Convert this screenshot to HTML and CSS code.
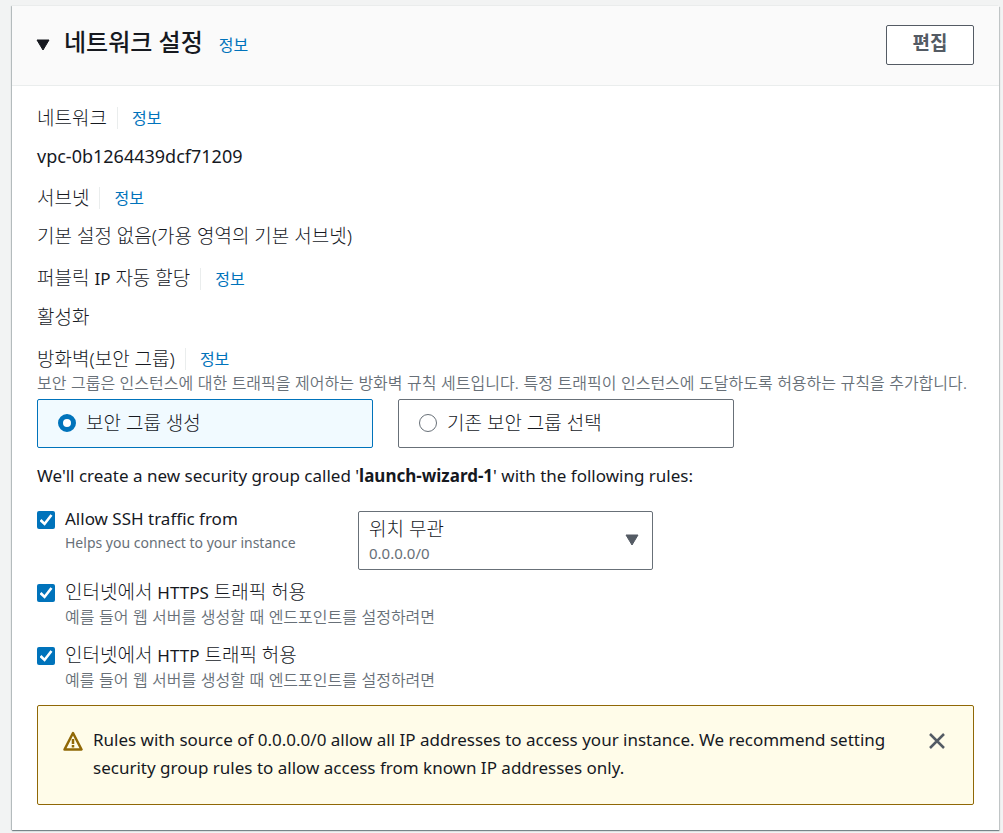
FILE: index.html
```html
<!DOCTYPE html>
<html lang="ko">
<head>
<meta charset="utf-8">
<title>네트워크 설정</title>
<link rel="stylesheet" href="styles.css">
</head>
<body>
<main class="card">
  <header class="card-header">
    <button class="toggle" type="button" aria-expanded="true" aria-label="네트워크 설정 접기">
      <svg class="caret" viewBox="0 0 14 12" aria-hidden="true"><path d="M1 1h12L7 11z" fill="currentColor" stroke="currentColor" stroke-linejoin="round"/></svg>
    </button>
    <h2 class="title">네트워크 설정</h2>
    <a class="info" href="#">정보</a>
    <button class="edit" type="button">편집</button>
  </header>
  <div class="card-body">
    <dl class="fields">
      <div class="field">
        <dt class="field-label"><span class="name">네트워크</span><a class="info" href="#">정보</a></dt>
        <dd class="value identifier">vpc-0b1264439dcf71209</dd>
      </div>
      <div class="field">
        <dt class="field-label"><span class="name">서브넷</span><a class="info" href="#">정보</a></dt>
        <dd class="value">기본 설정 없음(가용 영역의 기본 서브넷)</dd>
      </div>
      <div class="field">
        <dt class="field-label"><span class="name">퍼블릭 <span class="latin">IP</span> 자동 할당</span><a class="info" href="#">정보</a></dt>
        <dd class="value">활성화</dd>
      </div>
    </dl>
    <section class="firewall">
      <div class="field-label"><span class="name" id="firewall-name">방화벽(보안 그룹)</span><a class="info" href="#">정보</a></div>
      <p class="hint">보안 그룹은 인스턴스에 대한 트래픽을 제어하는 방화벽 규칙 세트입니다. 특정 트래픽이 인스턴스에 도달하도록 허용하는 규칙을 추가합니다.</p>
      <div class="tiles" role="radiogroup" aria-labelledby="firewall-name">
        <label class="tile"><input class="radio" type="radio" name="group" checked><span>보안 그룹 생성</span></label>
        <label class="tile"><input class="radio" type="radio" name="group"><span>기존 보안 그룹 선택</span></label>
      </div>
    </section>
    <p class="summary latin">We'll create a new security group called '<b>launch-wizard-1</b>' with the following rules:</p>
    <div class="rules">
      <div class="rule-row">
        <label class="rule">
          <input class="check" type="checkbox" checked>
          <span class="rule-text"><span class="rule-name latin">Allow SSH traffic from</span><span class="rule-hint latin-small">Helps you connect to your instance</span></span>
        </label>
        <div class="picker">
          <select class="select" aria-label="Allow SSH traffic from"><option>위치 무관</option></select>
          <span class="picker-detail">0.0.0.0/0</span>
          <svg class="picker-caret" viewBox="0 0 14 12" aria-hidden="true"><path d="M1 1h12L7 11z" fill="currentColor" stroke="currentColor" stroke-linejoin="round"/></svg>
        </div>
      </div>
      <label class="rule">
        <input class="check" type="checkbox" checked>
        <span class="rule-text"><span class="rule-name">인터넷에서 <span class="latin">HTTPS</span> 트래픽 허용</span><span class="rule-hint">예를 들어 웹 서버를 생성할 때 엔드포인트를 설정하려면</span></span>
      </label>
      <label class="rule">
        <input class="check" type="checkbox" checked>
        <span class="rule-text"><span class="rule-name">인터넷에서 <span class="latin">HTTP</span> 트래픽 허용</span><span class="rule-hint">예를 들어 웹 서버를 생성할 때 엔드포인트를 설정하려면</span></span>
      </label>
    </div>
    <div class="alert" role="alert">
      <svg class="warning" viewBox="0 0 20 20" aria-hidden="true"><path d="M10 2 18.5 18.5h-17z" fill="none" stroke="currentColor" stroke-width="2.5" stroke-linejoin="round"/><path d="M10 8v5M10 14v2.5" fill="none" stroke="currentColor" stroke-width="2.5"/></svg>
      <p class="alert-text latin">Rules with source of 0.0.0.0/0 allow all IP addresses to access your instance. We recommend setting security group rules to allow access from known IP addresses only.</p>
      <button class="close" type="button" aria-label="닫기">
        <svg viewBox="0 0 18 18" aria-hidden="true"><path d="M2 2l14 14M16 2L2 16" fill="none" stroke="currentColor" stroke-width="2.5"/></svg>
      </button>
    </div>
  </div>
</main>
</body>
</html>
```

FILE: styles.css
```css
* { box-sizing: border-box; }
body {
  margin: 0;
  padding: 6px 4px 3px 12px;
  background: #f2f3f3;
  color: #16191f;
  font-family: "Noto Sans", "Noto Sans CJK KR", sans-serif;
  font-size: 19px;
  font-weight: 300;
  line-height: 28px;
}
h2, p, dl, dd { margin: 0; }
button { font: inherit; cursor: pointer; }
.latin { font-size: 17px; font-weight: 400; }
.identifier { font-size: 18px; font-weight: 400; }
.card {
  background: #fff;
  box-shadow: 0 1px 1px 0 rgba(0, 28, 36, .4), 1px 1px 1px 0 rgba(0, 28, 36, .15), -1px 0 1px 0 rgba(0, 28, 36, .2);
}
.card-header {
  display: flex;
  align-items: center;
  height: 80px;
  padding: 0 25px 2px 24px;
  background: #fafafa;
  border-bottom: 1px solid #eaeded;
}
.toggle {
  display: flex;
  margin-right: 14px;
  padding: 0;
  border: 0;
  background: none;
  color: inherit;
}
.caret { width: 14px; height: 12px; }
.title {
  margin-right: 16px;
  padding-bottom: 6px;
  font-size: 24px;
  font-weight: 500;
}
.info {
  color: #0073bb;
  font-size: 16px;
  font-weight: 400;
  text-decoration: none;
}
.edit {
  width: 88px;
  height: 40px;
  margin-left: auto;
  padding: 0 0 4px;
  border: 1px solid #545b64;
  border-radius: 2px;
  background: #fff;
  color: #545b64;
  font-weight: 700;
}
.card-body { padding: 18px 25px 25px; }
.fields { display: grid; gap: 14px; }
.field { display: grid; gap: 10px; }
.field-label { display: flex; align-items: center; }
.name {
  margin-right: 10px;
}
.field-label .info {
  padding-left: 14px;
  border-left: 1px solid #eaeded;
  line-height: 22px;
}
.firewall { margin-top: 14px; }
.hint {
  margin-bottom: 6px;
  color: #687078;
  font-family: Inter, "Noto Sans CJK KR", sans-serif;
  font-size: 16px;
  font-weight: 350;
  line-height: 20px;
}
.tiles {
  display: grid;
  grid-template-columns: repeat(2, minmax(0, 336px));
  gap: 25px;
}
.tile {
  display: flex;
  align-items: center;
  gap: 10px;
  height: 49px;
  padding: 0 20px 2px;
  border: 1px solid #687078;
  border-radius: 2px;
}
.tile:has(:checked) { background: #f1faff; border-color: #0073bb; }
.radio, .check { appearance: none; flex: none; margin: 0; }
.radio {
  width: 18px;
  height: 18px;
  border: 1px solid #687078;
  border-radius: 50%;
  background: #fff;
}
.radio:checked { border: 5px solid #0073bb; }
.summary { margin-top: 14px; }
.rules { display: grid; gap: 10px; margin-top: 17px; }
.rule-row { display: grid; grid-template-columns: 321px minmax(0, 295px); }
.rule { display: flex; gap: 10px; padding-bottom: 4px; }
.rule-text { display: grid; align-content: start; }
.rule-name { line-height: 24px; }
.rule-hint {
  color: #687078;
  font-family: Inter, "Noto Sans CJK KR", sans-serif;
  font-size: 16px;
  font-weight: 350;
  line-height: 24px;
}
.latin-small {
  font-family: "Noto Sans", sans-serif;
  font-size: 14px;
  font-weight: 400;
}
.check {
  width: 18px;
  height: 18px;
  margin-top: 4px;
  border-radius: 2px;
  background: #0073bb;
  display: grid;
  place-items: center;
}
.check:checked::before {
  content: "";
  width: 13px;
  height: 12px;
  background: #fff;
  clip-path: polygon(0 58%, 15% 42%, 38% 66%, 84% 2%, 100% 14%, 40% 98%);
}
.picker { position: relative; margin-top: 4px; }
.select {
  appearance: none;
  display: block;
  width: 100%;
  height: 59px;
  padding: 2px 40px 25px 10px;
  border: 1px solid #687078;
  border-radius: 2px;
  background: #fff;
  color: inherit;
  font: inherit;
}
.picker-detail {
  position: absolute;
  left: 11px;
  bottom: 6px;
  color: #687078;
  font-size: 15px;
  font-weight: 400;
  line-height: 22px;
  pointer-events: none;
}
.picker-caret {
  position: absolute;
  right: 14px;
  top: 23px;
  width: 14px;
  height: 12px;
  color: #545b64;
  pointer-events: none;
}
.alert {
  display: flex;
  align-items: flex-start;
  margin-top: 9px;
  padding: 20px 25px 22px;
  border: 1px solid #906806;
  border-radius: 2px;
  background: #fffce9;
}
.warning {
  flex: none;
  width: 20px;
  height: 20px;
  margin: 5px 10px 0 0;
  color: #906806;
}
.alert-text { flex: 1; padding-right: 32px; }
.close {
  flex: none;
  width: 22px;
  height: 30px;
  padding: 6px 2px;
  border: 0;
  background: none;
  color: #545b64;
}
.close svg { display: block; width: 18px; height: 18px; }
```
